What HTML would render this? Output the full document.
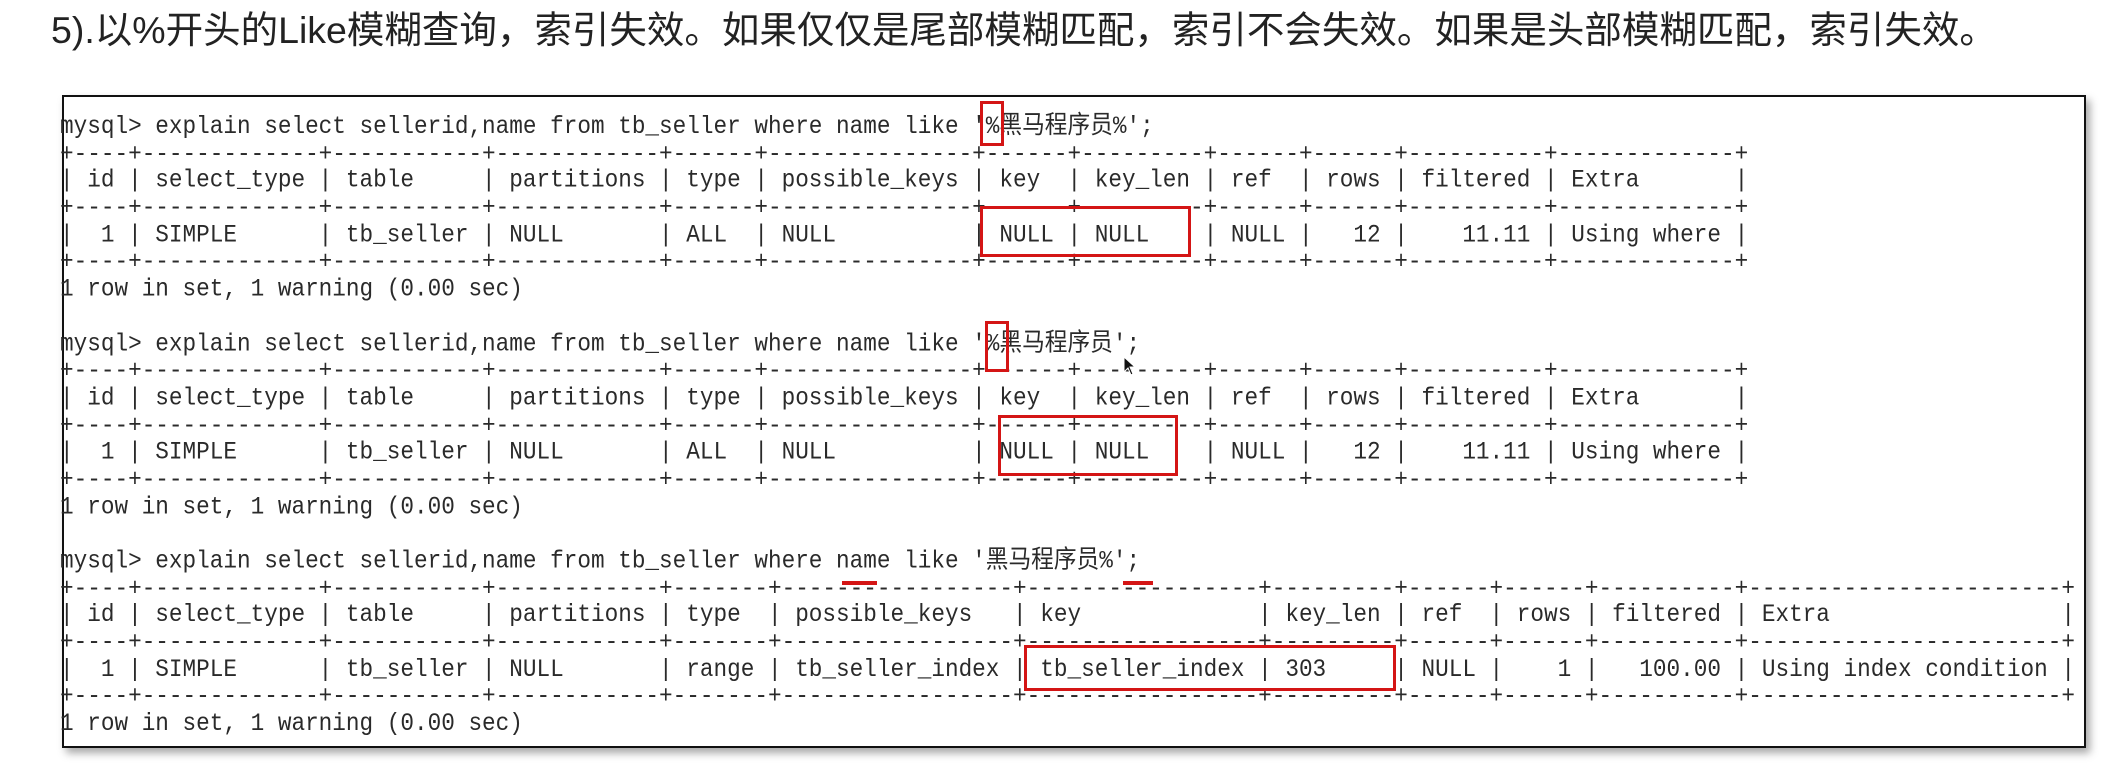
<!DOCTYPE html>
<html><head><meta charset="utf-8"><style>
html,body{margin:0;padding:0;background:#fff;width:2121px;height:774px;overflow:hidden;position:relative}
.title{position:absolute;left:51px;top:7px;font-family:"Liberation Sans","Noto Sans CJK SC",sans-serif;font-size:37.5px;color:#222;white-space:nowrap;line-height:46px}
.frame{position:absolute;left:62px;top:95px;width:2020px;height:649px;border:2px solid #111;box-shadow:4px 5px 8px rgba(0,0,0,.35);background:#fff}
pre{position:absolute;left:60px;top:113px;margin:0;font-family:"Liberation Mono","Noto Sans CJK SC",monospace;font-size:22.7px;line-height:24.68px;color:#2a2a2a;transform:scaleY(1.1);transform-origin:0 0}
.r{position:absolute;border:3px solid #d41515;box-sizing:border-box}
.u{position:absolute;height:4px;background:#d41515}
</style></head><body>
<div class="title">5).以%开头的Like模糊查询，索引失效。如果仅仅是尾部模糊匹配，索引不会失效。如果是头部模糊匹配，索引失效。</div>
<div class="frame"></div>
<pre>mysql&gt; explain select sellerid,name from tb_seller where name like '%黑马程序员%';
+----+-------------+-----------+------------+------+---------------+------+---------+------+------+----------+-------------+
| id | select_type | table     | partitions | type | possible_keys | key  | key_len | ref  | rows | filtered | Extra       |
+----+-------------+-----------+------------+------+---------------+------+---------+------+------+----------+-------------+
|  1 | SIMPLE      | tb_seller | NULL       | ALL  | NULL          | NULL | NULL    | NULL |   12 |    11.11 | Using where |
+----+-------------+-----------+------------+------+---------------+------+---------+------+------+----------+-------------+
1 row in set, 1 warning (0.00 sec)

mysql&gt; explain select sellerid,name from tb_seller where name like '%黑马程序员';
+----+-------------+-----------+------------+------+---------------+------+---------+------+------+----------+-------------+
| id | select_type | table     | partitions | type | possible_keys | key  | key_len | ref  | rows | filtered | Extra       |
+----+-------------+-----------+------------+------+---------------+------+---------+------+------+----------+-------------+
|  1 | SIMPLE      | tb_seller | NULL       | ALL  | NULL          | NULL | NULL    | NULL |   12 |    11.11 | Using where |
+----+-------------+-----------+------------+------+---------------+------+---------+------+------+----------+-------------+
1 row in set, 1 warning (0.00 sec)

mysql&gt; explain select sellerid,name from tb_seller where name like '黑马程序员%';
+----+-------------+-----------+------------+-------+-----------------+-----------------+---------+------+------+----------+-----------------------+
| id | select_type | table     | partitions | type  | possible_keys   | key             | key_len | ref  | rows | filtered | Extra                 |
+----+-------------+-----------+------------+-------+-----------------+-----------------+---------+------+------+----------+-----------------------+
|  1 | SIMPLE      | tb_seller | NULL       | range | tb_seller_index | tb_seller_index | 303     | NULL |    1 |   100.00 | Using index condition |
+----+-------------+-----------+------------+-------+-----------------+-----------------+---------+------+------+----------+-----------------------+
1 row in set, 1 warning (0.00 sec)</pre>
<div class="r" style="left:980px;top:101px;width:24px;height:45px"></div>
<div class="r" style="left:980px;top:206px;width:211px;height:51px"></div>
<div class="r" style="left:985px;top:321px;width:24px;height:51px"></div>
<div class="r" style="left:998px;top:415px;width:180px;height:61px"></div>
<div class="r" style="left:1024px;top:645px;width:372px;height:46px"></div>
<div class="u" style="left:842px;top:581px;width:35px"></div>
<div class="u" style="left:1123px;top:581px;width:30px"></div>
<svg style="position:absolute;left:1123px;top:356px" width="14" height="20" viewBox="0 0 14 20"><path d="M1 1 L1 16 L5 12 L8 19 L10 18 L7 11 L12 11 Z" fill="#111" stroke="#fff" stroke-width="1"/></svg>
</body></html>
